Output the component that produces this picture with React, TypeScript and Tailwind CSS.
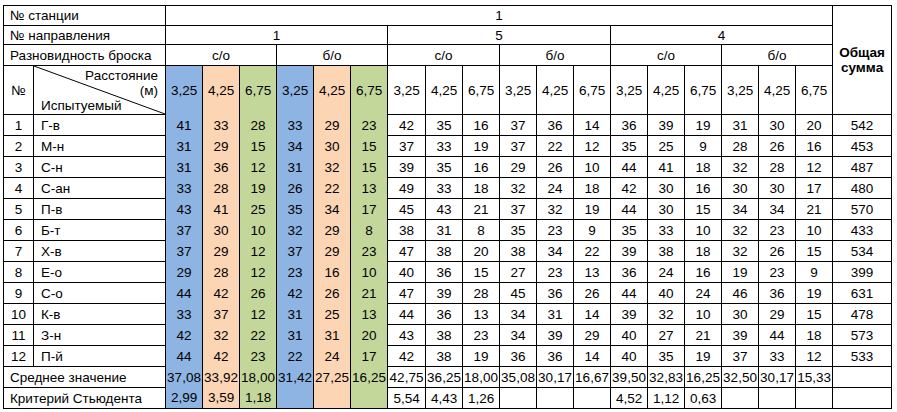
import React from "react";

const COLORS = ["bg-[#8db4e2]", "bg-[#fcd5b4]", "bg-[#c4d79b]"];

const rows: [string, string, string[], string][] = [
  ["1", "Г-в", "41 33 28 33 29 23 42 35 16 37 36 14 36 39 19 31 30 20".split(" "), "542"],
  ["2", "М-н", "31 29 15 34 30 15 37 33 19 37 22 12 35 25 9 28 26 16".split(" "), "453"],
  ["3", "С-н", "31 36 12 31 32 15 39 35 16 29 26 10 44 41 18 32 28 12".split(" "), "487"],
  ["4", "С-ан", "33 28 19 26 22 13 49 33 18 32 24 18 42 30 16 30 30 17".split(" "), "480"],
  ["5", "П-в", "43 41 25 35 34 17 45 43 21 37 32 19 44 30 15 34 34 21".split(" "), "570"],
  ["6", "Б-т", "37 30 10 32 29 8 38 31 8 35 23 9 35 33 10 32 23 10".split(" "), "433"],
  ["7", "Х-в", "37 29 12 37 29 23 47 38 20 38 34 22 39 38 18 32 26 15".split(" "), "534"],
  ["8", "Е-о", "29 28 12 23 16 10 40 36 15 27 23 13 36 24 16 19 23 9".split(" "), "399"],
  ["9", "С-о", "44 42 26 42 26 21 47 39 28 45 36 26 44 40 24 46 36 19".split(" "), "631"],
  ["10", "К-в", "33 37 12 31 25 13 44 36 13 34 31 14 39 32 10 30 29 15".split(" "), "478"],
  ["11", "З-н", "42 32 22 31 31 20 43 38 23 34 39 29 40 27 21 39 44 18".split(" "), "573"],
  ["12", "П-й", "44 42 23 22 24 17 42 38 19 36 36 14 40 35 19 37 33 12".split(" "), "533"],
];

const avg = "37,08 33,92 18,00 31,42 27,25 16,25 42,75 36,25 18,00 35,08 30,17 16,67 39,50 32,83 16,25 32,50 30,17 15,33".split(" ");
const crit = ["2,99", "3,59", "1,18", "", "", "", "5,54", "4,43", "1,26", "", "", "", "4,52", "1,12", "0,63", "", "", ""];

const B = "border border-black p-0";

function ValueCells({ vals, last }: { vals: string[]; last?: boolean }) {
  return (
    <>
      {vals.map((v, j) =>
        j < 6 ? (
          <td
            key={j}
            className={`${COLORS[j % 3]} border-x border-black p-0 text-center ${last ? "border-b" : ""}`}
          >
            {v}
          </td>
        ) : (
          <td key={j} className={`${B} text-center`}>
            {v}
          </td>
        )
      )}
    </>
  );
}

export default function App() {
  const dist = ["3,25", "4,25", "6,75"];
  const dists = [...dist, ...dist, ...dist, ...dist, ...dist, ...dist];
  return (
    <div className="w-[897px] h-[412px] bg-white pl-[3px] pt-[5px] font-['Liberation_Sans',Arial,sans-serif] text-[13.5px] text-black leading-[15px]">
      <table className="border-collapse table-fixed w-[889px]">
        <colgroup>
          <col className="w-[30px]" />
          <col className="w-[132px]" />
          {Array.from({ length: 18 }).map((_, i) => (
            <col key={i} className={i === 6 ? "w-[38px]" : "w-[37px]"} />
          ))}
          <col className="w-[59px]" />
        </colgroup>
        <tbody>
          <tr className="h-[20px]">
            <td colSpan={2} className={`${B} pl-[6px]`}>№ станции</td>
            <td colSpan={18} className={`${B} text-center`}>1</td>
            <td rowSpan={4} className={`${B} text-center font-bold`}>
              Общая<br />сумма
            </td>
          </tr>
          <tr className="h-[19px]">
            <td colSpan={2} className={`${B} pl-[6px]`}>№ направления</td>
            <td colSpan={6} className={`${B} text-center`}>1</td>
            <td colSpan={6} className={`${B} text-center`}>5</td>
            <td colSpan={6} className={`${B} text-center`}>4</td>
          </tr>
          <tr className="h-[21px]">
            <td colSpan={2} className={`${B} pl-[6px]`}>Разновидность броска</td>
            {["с/о", "б/о", "с/о", "б/о", "с/о", "б/о"].map((t, i) => (
              <td key={i} colSpan={3} className={`${B} text-center`}>{t}</td>
            ))}
          </tr>
          <tr className="h-[48px]">
            <td className={`${B} text-center`}>№</td>
            <td className={`${B} relative`}>
              <div className="relative h-[48px] flex flex-col">
                <svg className="absolute inset-0 w-full h-full" viewBox="0 0 132 48" preserveAspectRatio="none">
                  <line x1="0" y1="0" x2="132" y2="48" stroke="black" strokeWidth="1" />
                </svg>
                <div className="text-right pr-[7px] pt-[2px]">Расстояние</div>
                <div className="text-right pr-[7px]">(м)</div>
                <div className="pl-[7px]">Испытуемый</div>
              </div>
            </td>
            <ValueCells vals={dists} />
          </tr>
          {rows.map(([n, name, vals, sum]) => (
            <tr key={n} className="h-[21px]">
              <td className={`${B} text-center`}>{n}</td>
              <td className={`${B} pl-[7px]`}>{name}</td>
              <ValueCells vals={vals} />
              <td className={`${B} text-center`}>{sum}</td>
            </tr>
          ))}
          <tr className="h-[21px]">
            <td colSpan={2} className={`${B} pl-[6px]`}>Среднее значение</td>
            <ValueCells vals={avg} />
            <td className={B}></td>
          </tr>
          <tr className="h-[21px]">
            <td colSpan={2} className={`${B} pl-[6px]`}>Критерий Стьюдента</td>
            <ValueCells vals={crit} last />
            <td className={B}></td>
          </tr>
        </tbody>
      </table>
    </div>
  );
}
